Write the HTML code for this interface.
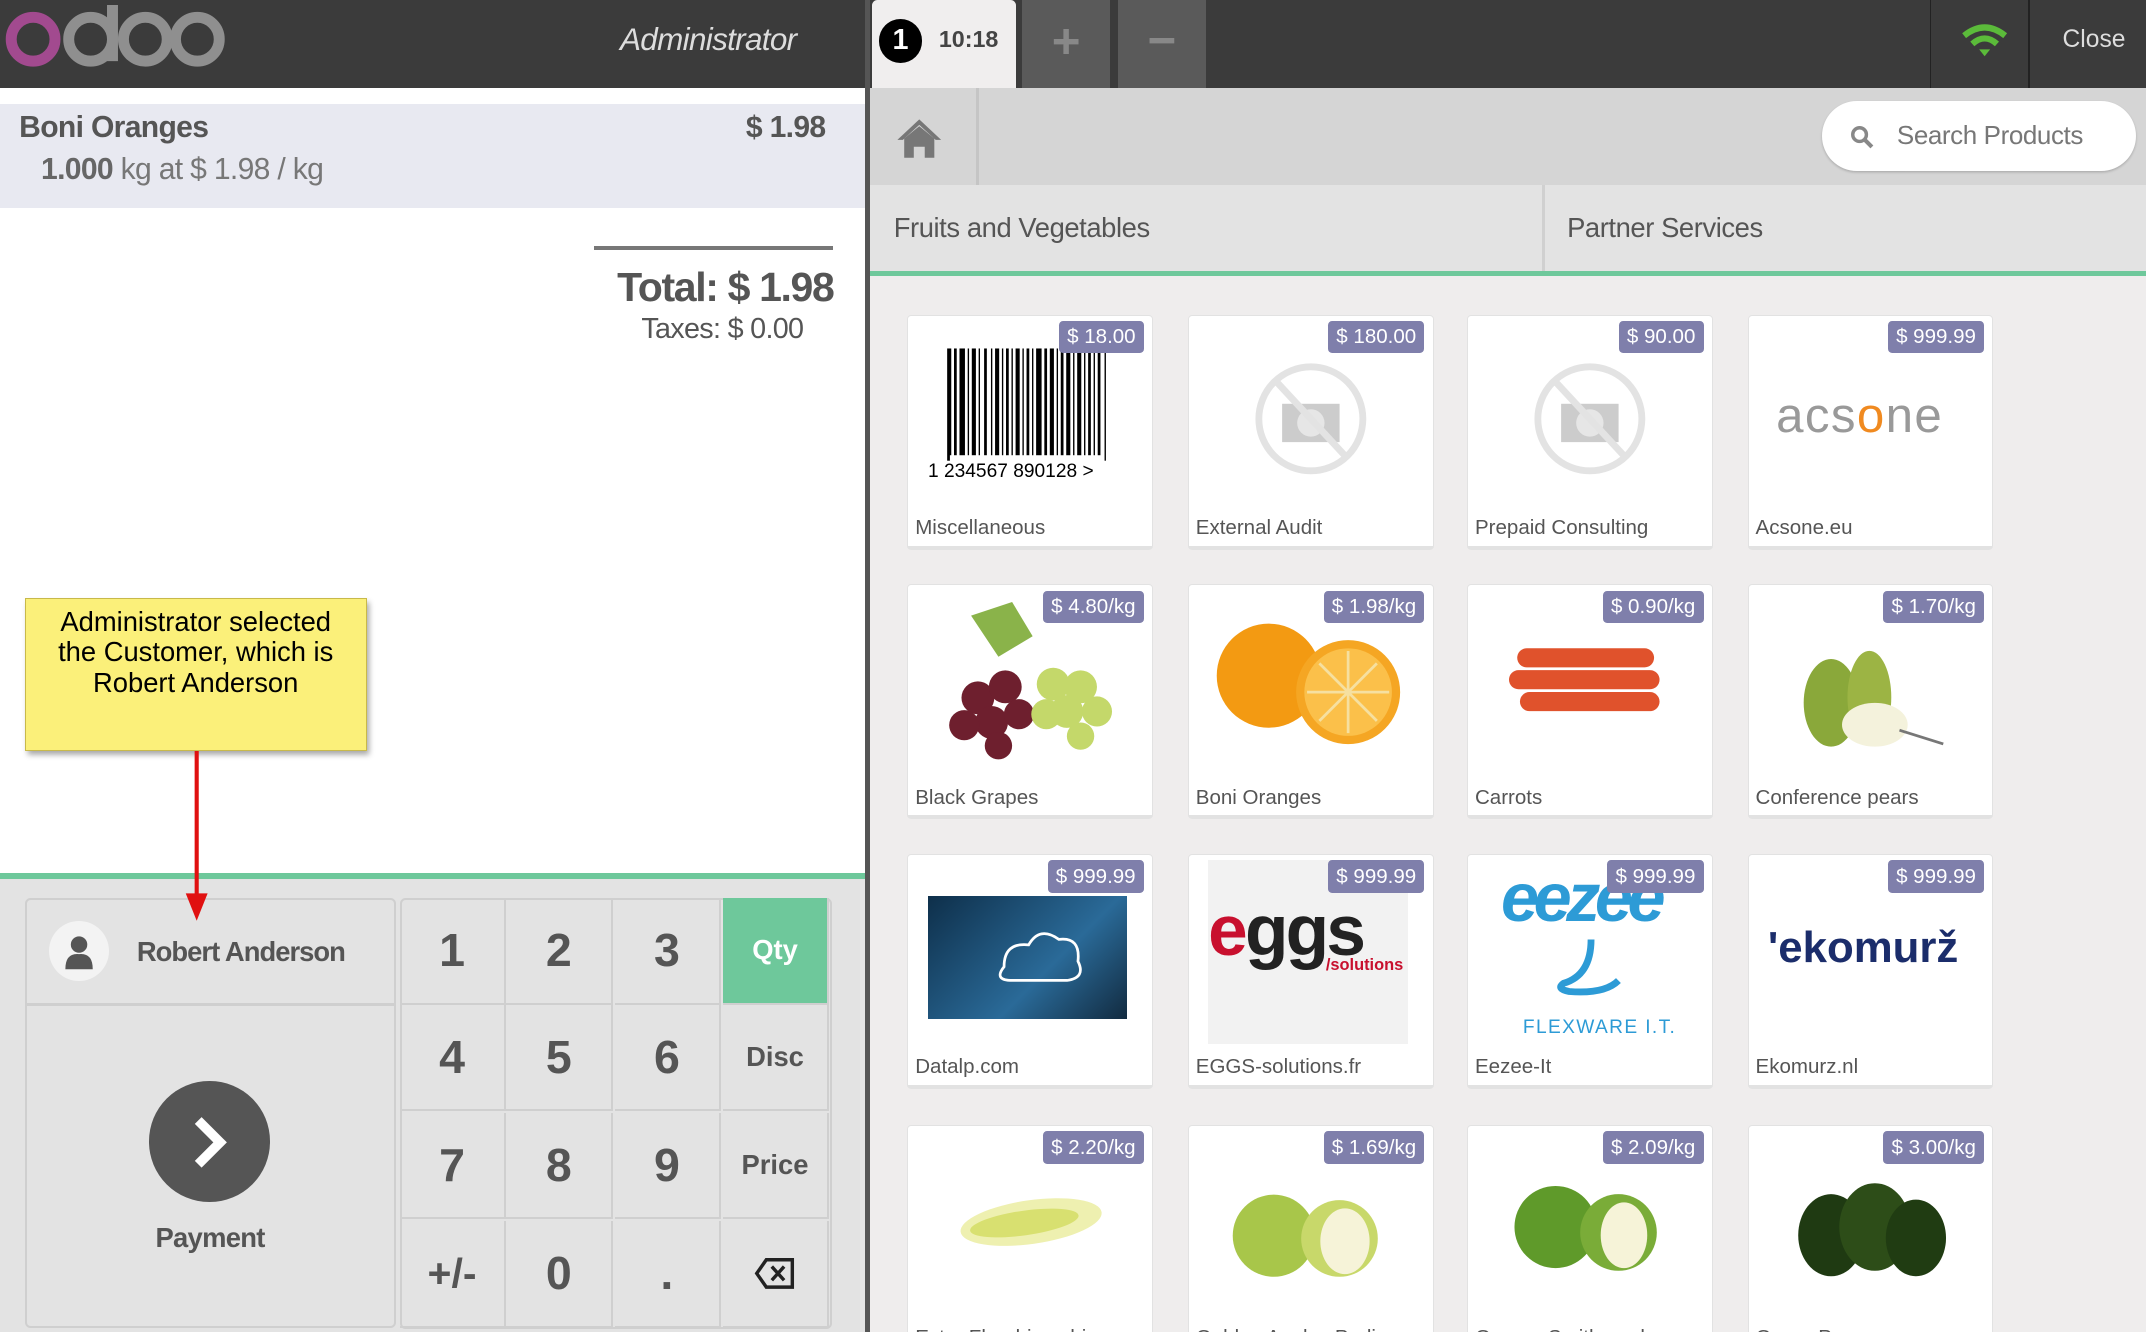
<!DOCTYPE html>
<html><head><meta charset="utf-8"><style>
html,body{margin:0;padding:0;width:2146px;height:1332px;overflow:hidden;background:#efeded}
#w{zoom:1.36862;position:relative;width:1568px;height:973px;font-family:"Liberation Sans",sans-serif;color:#555}
.a{position:absolute;white-space:nowrap}
.card{position:absolute;width:178px;height:168px;background:#fff;border:1px solid #e2e2e2;border-bottom:3px solid #e2e2e2;border-radius:3px;overflow:hidden}
.tag{position:absolute;right:6px;top:4px;background:#7f7fab;color:#fff;font-size:15px;padding:3px 6px;border-radius:3px}
.nm{position:absolute;left:5px;bottom:4px;font-size:15px;color:#555;white-space:nowrap}
.key{position:absolute;width:78px;height:78px;border-right:2px solid #cfcfcf;border-bottom:2px solid #cfcfcf;box-sizing:border-box;display:flex;align-items:center;justify-content:center;font-size:34px;color:#555;font-weight:bold}
.kt{font-size:20px}
</style></head><body><div id="w">
<div class="a" style="left:0;top:0;width:1568px;height:64px;background:#3b3b3b"></div>
<svg class="a" style="left:2px;top:4px" width="165" height="46"><g fill="none" stroke-width="8"><circle cx="22" cy="25" r="16" stroke="#a24a8f"/><circle cx="64" cy="25" r="16" stroke="#8f8f8f"/><line x1="80" y1="0" x2="80" y2="41" stroke="#8f8f8f"/><circle cx="104" cy="25" r="16" stroke="#8f8f8f"/><circle cx="142" cy="25" r="16" stroke="#8f8f8f"/></g></svg>
<div class="a" style="left:453px;top:16px;font-size:23px;font-style:italic;color:#ddd;letter-spacing:-0.5px">Administrator</div>
<div class="a" style="left:632px;top:0;width:4px;height:973px;background:#555"></div>
<div class="a" style="left:637px;top:0;width:105px;height:64px;background:#f0eeee;border-radius:4px 4px 0 0"></div>
<div class="a" style="left:642px;top:14px;width:32px;height:32px;border-radius:50%;background:#000;color:#fff;font-weight:bold;font-size:21px;text-align:center;line-height:32px">1</div>
<div class="a" style="left:686px;top:19px;font-size:17px;font-weight:bold;color:#444">10:18</div>
<div class="a" style="left:747px;top:0;width:64px;height:64px;background:#5a5a5a;color:#888;font-size:36px;text-align:center;line-height:62px;font-weight:bold">+</div>
<div class="a" style="left:817px;top:0;width:64px;height:64px;background:#5a5a5a;color:#888;font-size:36px;text-align:center;line-height:60px;font-weight:bold">−</div>
<div class="a" style="left:1410px;top:0;width:1px;height:64px;background:#222"></div>
<div class="a" style="left:1482px;top:0;width:1px;height:64px;background:#222"></div>
<svg class="a" style="left:1432px;top:16px" width="36" height="28"><g fill="none" stroke="#5bbb3a" stroke-width="4.5"><path d="M3 10 Q18 -2 33 10"/><path d="M9 16 Q18 8 27 16"/></g><path d="M14 20 L22 20 L18 25Z" fill="#5bbb3a"/></svg>
<div class="a" style="left:1507px;top:19px;font-size:18px;color:#ddd">Close</div>
<div class="a" style="left:0;top:64px;width:632px;height:574px;background:#fff"></div>
<div class="a" style="left:0;top:76px;width:632px;height:76px;background:#e8e9f1"></div>
<div class="a" style="left:14px;top:81px;font-size:22px;font-weight:bold;color:#555;letter-spacing:-0.5px">Boni Oranges</div>
<div class="a" style="left:545px;top:81px;font-size:22px;font-weight:bold;color:#555;letter-spacing:-0.5px">$ 1.98</div>
<div class="a" style="left:30px;top:112px;font-size:22px;color:#777;letter-spacing:-0.5px"><b style="color:#666">1.000</b> kg at $ 1.98 / kg</div>
<div class="a" style="left:434px;top:180px;width:175px;height:3px;background:#777"></div>
<div class="a" style="left:409px;top:193px;width:200px;text-align:right;font-size:30px;font-weight:bold;color:#555;letter-spacing:-1px">Total: $ 1.98</div>
<div class="a" style="left:387px;top:229px;width:200px;text-align:right;font-size:21px;color:#555;letter-spacing:-0.5px">Taxes: $ 0.00</div>
<div class="a" style="left:18px;top:437px;width:250px;height:112px;background:#fbf07a;border:1px solid #c8b94a;box-shadow:2px 3px 4px rgba(0,0,0,.35);box-sizing:border-box;text-align:center;font-size:20px;line-height:22px;color:#000;padding:6px 14px 0;white-space:normal">Administrator selected the Customer, which is Robert Anderson</div>
<div class="a" style="left:0;top:638px;width:632px;height:4px;background:#6ec89b"></div>
<div class="a" style="left:0;top:642px;width:632px;height:331px;background:#e3e3e3"></div>
<div class="a" style="left:18px;top:656px;width:271px;height:314px;border:2px solid #cfcfcf;box-sizing:border-box;border-radius:4px"></div>
<div class="a" style="left:18px;top:733px;width:271px;height:2px;background:#cfcfcf"></div>
<div class="a" style="left:36px;top:673px;width:44px;height:44px;border-radius:50%;background:#f3f3f3"></div>
<svg class="a" style="left:47px;top:683px" width="22" height="26"><circle cx="11" cy="7" r="6" fill="#555"/><path d="M1 25 Q1 13 11 14 Q21 13 21 25Z" fill="#555"/></svg>
<div class="a" style="left:100px;top:684px;font-size:20px;font-weight:bold;color:#555;letter-spacing:-0.7px">Robert Anderson</div>
<div class="a" style="left:109px;top:790px;width:88px;height:88px;border-radius:50%;background:#555"></div>
<svg class="a" style="left:139px;top:815px" width="30" height="40"><path d="M6 4 L22 20 L6 36" fill="none" stroke="#fff" stroke-width="7"/></svg>
<div class="a" style="left:18px;top:893px;width:271px;text-align:center;font-size:20px;font-weight:bold;color:#555;letter-spacing:-0.5px">Payment</div>
<div class="a" style="left:292px;top:656px;width:316px;height:315px;border:2px solid #cfcfcf;border-radius:4px;box-sizing:border-box"></div>
<div class="key" style="left:292px;top:656px">1</div><div class="key" style="left:370px;top:656px">2</div><div class="key" style="left:449px;top:656px">3</div><div class="key kt" style="left:528px;top:656px;background:#6ec89b;color:#fff">Qty</div>
<div class="key" style="left:292px;top:734px">4</div><div class="key" style="left:370px;top:734px">5</div><div class="key" style="left:449px;top:734px">6</div><div class="key kt" style="left:528px;top:734px">Disc</div>
<div class="key" style="left:292px;top:813px">7</div><div class="key" style="left:370px;top:813px">8</div><div class="key" style="left:449px;top:813px">9</div><div class="key kt" style="left:528px;top:813px">Price</div>
<div class="key" style="left:292px;top:892px;font-size:30px">+/-</div><div class="key" style="left:370px;top:892px">0</div><div class="key" style="left:449px;top:892px">.</div><div class="key" style="left:528px;top:892px"><svg width="30" height="24"><path d="M9 2 L28 2 L28 22 L9 22 L2 12Z" fill="none" stroke="#222" stroke-width="2.5"/><path d="M13 7 L22 17 M22 7 L13 17" stroke="#222" stroke-width="2.5"/></svg></div>
<svg class="a" style="left:134px;top:549px" width="20" height="126"><line x1="10" y1="0" x2="10" y2="108" stroke="#e01010" stroke-width="3"/><path d="M2 104 L18 104 L10 124Z" fill="#e01010"/></svg>
<div class="a" style="left:636px;top:64px;width:932px;height:71px;background:#d5d5d5"></div>
<div class="a" style="left:713px;top:64px;width:2px;height:71px;background:#c5c5c5"></div>
<svg class="a" style="left:655px;top:86px" width="34" height="30"><path d="M17 1 L33 16 L29 16 L17 5 L5 16 L1 16Z" fill="#777"/><path d="M6 15 L17 6 L28 15 L28 29 L21 29 L21 21 L13 21 L13 29 L6 29Z" fill="#777"/></svg>
<div class="a" style="left:1331px;top:74px;width:230px;height:51px;background:#fff;border-radius:26px;box-shadow:0 1px 2px rgba(0,0,0,.2)"></div>
<svg class="a" style="left:1352px;top:91px" width="18" height="18"><circle cx="7" cy="7" r="5" fill="none" stroke="#888" stroke-width="2.5"/><line x1="11" y1="11" x2="16" y2="16" stroke="#888" stroke-width="3"/></svg>
<div class="a" style="left:1386px;top:88px;font-size:19px;color:#777;letter-spacing:-0.3px">Search Products</div>
<div class="a" style="left:636px;top:135px;width:932px;height:63px;background:#e3e3e3"></div>
<div class="a" style="left:1127px;top:135px;width:2px;height:63px;background:#d0d0d0"></div>
<div class="a" style="left:653px;top:155px;font-size:20px;color:#555;letter-spacing:-0.3px">Fruits and Vegetables</div>
<div class="a" style="left:1145px;top:155px;font-size:20px;color:#555;letter-spacing:-0.3px">Partner Services</div>
<div class="a" style="left:636px;top:198px;width:932px;height:4px;background:#6ec89b"></div>
<div class="card" style="left:663px;top:230px"><svg class="a" style="left:14px;top:20px" width="150" height="102"><g fill="#000"><rect x="14" y="4" width="3" height="82"/><rect x="19" y="4" width="2" height="82"/><rect x="23" y="4" width="4" height="82"/><rect x="29" y="4" width="1" height="82"/><rect x="32" y="4" width="3" height="82"/><rect x="37" y="4" width="1" height="82"/><rect x="41" y="4" width="2" height="82"/><rect x="46" y="4" width="1" height="82"/><rect x="49" y="4" width="3" height="82"/><rect x="54" y="4" width="1" height="82"/><rect x="57" y="4" width="2" height="82"/><rect x="61" y="4" width="1" height="82"/><rect x="64" y="4" width="3" height="82"/><rect x="69" y="4" width="1" height="82"/><rect x="72" y="4" width="2" height="82"/><rect x="76" y="4" width="1" height="82"/><rect x="79" y="4" width="4" height="82"/><rect x="85" y="4" width="2" height="82"/><rect x="89" y="4" width="3" height="82"/><rect x="94" y="4" width="1" height="82"/><rect x="97" y="4" width="2" height="82"/><rect x="101" y="4" width="3" height="82"/><rect x="106" y="4" width="1" height="82"/><rect x="109" y="4" width="3" height="82"/><rect x="114" y="4" width="1" height="82"/><rect x="117" y="4" width="2" height="82"/><rect x="121" y="4" width="1" height="82"/><rect x="124" y="4" width="2" height="82"/><rect x="129" y="4" width="1" height="82"/></g><rect x="16" y="82" width="112" height="14" fill="#fff"/><text x="0" y="98" font-size="14" font-family="Liberation Sans">1 234567 890128  &gt;</text></svg><div class="tag">$ 18.00</div><div class="nm">Miscellaneous</div></div>
<div class="card" style="left:868px;top:230px"><svg class="a" style="left:46px;top:32px" width="86" height="86"><circle cx="43" cy="43" r="38" fill="none" stroke="#e3e3e3" stroke-width="5"/><rect x="22" y="32" width="42" height="28" fill="#ccc"/><circle cx="43" cy="46" r="10" fill="#e6e6e6"/><line x1="18" y1="16" x2="68" y2="70" stroke="#e3e3e3" stroke-width="5"/></svg><div class="tag">$ 180.00</div><div class="nm">External Audit</div></div>
<div class="card" style="left:1072px;top:230px"><svg class="a" style="left:46px;top:32px" width="86" height="86"><circle cx="43" cy="43" r="38" fill="none" stroke="#e3e3e3" stroke-width="5"/><rect x="22" y="32" width="42" height="28" fill="#ccc"/><circle cx="43" cy="46" r="10" fill="#e6e6e6"/><line x1="18" y1="16" x2="68" y2="70" stroke="#e3e3e3" stroke-width="5"/></svg><div class="tag">$ 90.00</div><div class="nm">Prepaid Consulting</div></div>
<div class="card" style="left:1277px;top:230px"><div class="a" style="left:20px;top:52px;font-size:36px;color:#999;letter-spacing:1px">acs<span style="color:#f08a20">o</span>ne</div><div class="tag">$ 999.99</div><div class="nm">Acsone.eu</div></div>
<div class="card" style="left:663px;top:427px"><svg class="a" style="left:16px;top:12px" width="150" height="122"><path d="M30 10 L60 0 L75 25 L50 40Z" fill="#8ab34a"/><g fill="#6e1f2e"><circle cx="35" cy="70" r="12"/><circle cx="55" cy="62" r="12"/><circle cx="45" cy="88" r="12"/><circle cx="25" cy="90" r="11"/><circle cx="65" cy="82" r="11"/><circle cx="50" cy="105" r="10"/></g><g fill="#c4d86a"><circle cx="90" cy="60" r="12"/><circle cx="110" cy="62" r="12"/><circle cx="100" cy="80" r="12"/><circle cx="122" cy="80" r="11"/><circle cx="85" cy="82" r="11"/><circle cx="110" cy="98" r="10"/></g></svg><div class="tag">$ 4.80/kg</div><div class="nm">Black Grapes</div></div>
<div class="card" style="left:868px;top:427px"><svg class="a" style="left:18px;top:18px" width="150" height="110"><circle cx="40" cy="48" r="38" fill="#f39a12"/><circle cx="98" cy="60" r="38" fill="#f5a623"/><circle cx="98" cy="60" r="32" fill="#fbc04a"/><g stroke="#f6e0a0" stroke-width="2"><line x1="98" y1="30" x2="98" y2="90"/><line x1="68" y1="60" x2="128" y2="60"/><line x1="77" y1="39" x2="119" y2="81"/><line x1="119" y1="39" x2="77" y2="81"/></g></svg><div class="tag">$ 1.98/kg</div><div class="nm">Boni Oranges</div></div>
<div class="card" style="left:1072px;top:427px"><svg class="a" style="left:30px;top:40px" width="120" height="70"><g fill="#e0522c"><rect x="6" y="6" width="100" height="14" rx="7"/><rect x="0" y="22" width="110" height="14" rx="7"/><rect x="8" y="38" width="102" height="14" rx="7"/></g></svg><div class="tag">$ 0.90/kg</div><div class="nm">Carrots</div></div>
<div class="card" style="left:1277px;top:427px"><svg class="a" style="left:30px;top:24px" width="120" height="100"><ellipse cx="30" cy="62" rx="20" ry="32" fill="#8aa83a"/><ellipse cx="58" cy="58" rx="16" ry="34" fill="#9cb444"/><ellipse cx="62" cy="78" rx="24" ry="16" fill="#f4f2dc"/><path d="M80 82 L112 92" stroke="#777" stroke-width="2"/></svg><div class="tag">$ 1.70/kg</div><div class="nm">Conference pears</div></div>
<div class="card" style="left:663px;top:624px"><div class="a" style="left:14px;top:30px;width:146px;height:90px;background:linear-gradient(135deg,#0e2f4a,#2a6a98 60%,#122b40)"></div><svg class="a" style="left:40px;top:42px" width="100" height="70"><path d="M30 40 Q30 22 48 24 Q56 10 70 20 Q86 18 84 36 Q90 48 76 50 L36 50 Q22 50 30 40Z" fill="none" stroke="#fff" stroke-width="2"/></svg><div class="tag">$ 999.99</div><div class="nm">Datalp.com</div></div>
<div class="card" style="left:868px;top:624px"><div class="a" style="left:14px;top:4px;width:146px;height:134px;background:#f2f2f2"></div><div class="a" style="left:14px;top:26px;font-size:52px;font-weight:bold;color:#222;letter-spacing:-2px"><span style="color:#c8102e">e</span>ggs</div><div class="a" style="left:100px;top:74px;font-size:12px;color:#c8102e;font-weight:bold">/solutions</div><div class="tag">$ 999.99</div><div class="nm">EGGS-solutions.fr</div></div>
<div class="card" style="left:1072px;top:624px"><div class="a" style="left:24px;top:2px;font-size:50px;font-style:italic;color:#2d9bd6;font-weight:bold;letter-spacing:-4px">eezee</div><svg class="a" style="left:60px;top:58px" width="60" height="50"><path d="M30 4 Q30 30 10 36 Q4 40 14 42 Q40 44 50 34" fill="none" stroke="#2d9bd6" stroke-width="5"/></svg><div class="a" style="left:40px;top:118px;font-size:14px;color:#2d9bd6;letter-spacing:1px">FLEXWARE I.T.</div><div class="tag">$ 999.99</div><div class="nm">Eezee-It</div></div>
<div class="card" style="left:1277px;top:624px"><div class="a" style="left:14px;top:50px;font-size:32px;color:#1b2d6b;font-weight:bold">'ekomurž</div><div class="tag">$ 999.99</div><div class="nm">Ekomurz.nl</div></div>
<div class="card" style="left:663px;top:822px"><svg class="a" style="left:30px;top:40px" width="120" height="60"><ellipse cx="60" cy="30" rx="52" ry="16" fill="#eef0b0" transform="rotate(-8 60 30)"/><ellipse cx="55" cy="30" rx="40" ry="9" fill="#d8e070" transform="rotate(-8 60 30)"/></svg><div class="tag">$ 2.20/kg</div><div class="nm">Extra Flandrian chicory</div></div>
<div class="card" style="left:868px;top:822px"><svg class="a" style="left:30px;top:40px" width="120" height="80"><circle cx="32" cy="40" r="30" fill="#a8c64a"/><circle cx="80" cy="42" r="28" fill="#c8d86a"/><ellipse cx="84" cy="44" rx="18" ry="24" fill="#f6f3d8"/></svg><div class="tag">$ 1.69/kg</div><div class="nm">Golden Apples Perlim</div></div>
<div class="card" style="left:1072px;top:822px"><svg class="a" style="left:30px;top:36px" width="120" height="80"><circle cx="34" cy="38" r="30" fill="#5f9a2a"/><circle cx="80" cy="42" r="28" fill="#7aac38"/><ellipse cx="84" cy="44" rx="17" ry="24" fill="#f6f3d8"/></svg><div class="tag">$ 2.09/kg</div><div class="nm">Granny Smith apples</div></div>
<div class="card" style="left:1277px;top:822px"><svg class="a" style="left:30px;top:36px" width="120" height="80"><ellipse cx="30" cy="44" rx="24" ry="30" fill="#1f3a12"/><ellipse cx="62" cy="38" rx="26" ry="32" fill="#2d4d18"/><ellipse cx="92" cy="46" rx="22" ry="28" fill="#203c12"/></svg><div class="tag">$ 3.00/kg</div><div class="nm">Green Peppers</div></div>
</div></body></html>
